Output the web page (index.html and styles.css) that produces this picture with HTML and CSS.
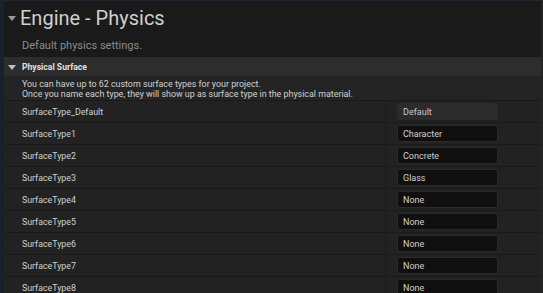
FILE: index.html
```html
<!DOCTYPE html>
<html lang="en">
<head>
  <meta charset="UTF-8">
  <title>Engine - Physics</title>
  <link rel="stylesheet" href="styles.css">
</head>
<body>
  <div class="panel">
    <div class="header">
      <h1><span class="arrow big"></span>Engine - Physics</h1>
      <p class="subtitle">Default physics settings.</p>
    </div>

    <div class="section">
      <div class="section-title"><span class="arrow"></span>Physical Surface</div>
      <div class="desc">
        You can have up to 62 custom surface types for your project.<br>
        Once you name each type, they will show up as surface type in the physical material.
      </div>

      <div class="row">
        <div class="name">SurfaceType_Default</div>
        <div class="value"><div class="field readonly">Default</div></div>
      </div>
      <div class="row">
        <div class="name">SurfaceType1</div>
        <div class="value"><div class="field">Character</div></div>
      </div>
      <div class="row">
        <div class="name">SurfaceType2</div>
        <div class="value"><div class="field">Concrete</div></div>
      </div>
      <div class="row">
        <div class="name">SurfaceType3</div>
        <div class="value"><div class="field">Glass</div></div>
      </div>
      <div class="row">
        <div class="name">SurfaceType4</div>
        <div class="value"><div class="field">None</div></div>
      </div>
      <div class="row">
        <div class="name">SurfaceType5</div>
        <div class="value"><div class="field">None</div></div>
      </div>
      <div class="row">
        <div class="name">SurfaceType6</div>
        <div class="value"><div class="field">None</div></div>
      </div>
      <div class="row">
        <div class="name">SurfaceType7</div>
        <div class="value"><div class="field">None</div></div>
      </div>
      <div class="row">
        <div class="name">SurfaceType8</div>
        <div class="value"><div class="field">None</div></div>
      </div>
    </div>
  </div>
</body>
</html>
```

FILE: styles.css
```css
body {
  margin: 0;
  background: #1a1a1a;
  font-family: Roboto, 'Liberation Sans', sans-serif;
  color: #c0c0c0;
  height: 293px;
  overflow: hidden;
}

.panel {
  border-top: 1px solid #1f2735;
  border-left: 4px solid #1b212b;
  border-right: 2px solid #242424;
  min-height: 100%;
}

.header {
  background: #1a1a1a;
  height: 57px;
  padding-left: 16px;
  box-sizing: border-box;
  border-bottom: 1px solid #2c2c2c;
}

h1 {
  margin: 0;
  padding-top: 5px;
  font-size: 20px;
  font-weight: normal;
  color: #cfcfcf;
  display: flex;
  align-items: center;
  margin-left: -12px;
}

.subtitle {
  margin: 9px 0 0 2px;
  font-size: 11px;
  color: #8c8c8c;
}

.arrow {
  display: inline-block;
  width: 0;
  height: 0;
  border-left: 4px solid transparent;
  border-right: 4px solid transparent;
  border-top: 5px solid #bdbdbd;
  margin-right: 6px;
}

.arrow.big {
  border-top: 5px solid #9a9a9a;
  margin-right: 4px;
}

.section-title {
  background: #2d2d2d;
  height: 18px;
  display: flex;
  align-items: center;
  padding-left: 4px;
  font-size: 8.6px;
  font-weight: bold;
  color: #e0e0e0;
}

.desc {
  background: #242424;
  padding: 3px 0 1px 18px;
  font-size: 8.9px;
  line-height: 10px;
  color: #d0d0d0;
  border-bottom: 1px solid #1a1a1a;
}

.row {
  display: flex;
  height: 21px;
  background: #222222;
  border-bottom: 1px solid #1a1a1a;
}

.name {
  width: 363px;
  padding-left: 18px;
  font-size: 8.8px;
  color: #d0d0d0;
  display: flex;
  align-items: center;
  border-right: 1px solid #1a1a1a;
}

.value {
  flex: 1;
  display: flex;
  align-items: center;
  padding-left: 11px;
}

.field {
  width: 94px;
  height: 15px;
  background: #0f0f0f;
  border: 1px solid #2a2a2a;
  border-radius: 3px;
  font-size: 9px;
  color: #d0d0d0;
  display: flex;
  align-items: center;
  padding-left: 5px;
}

.field.readonly {
  background: #2b2b2b;
  border-color: #2b2b2b;
  color: #c8c8c8;
}
```
